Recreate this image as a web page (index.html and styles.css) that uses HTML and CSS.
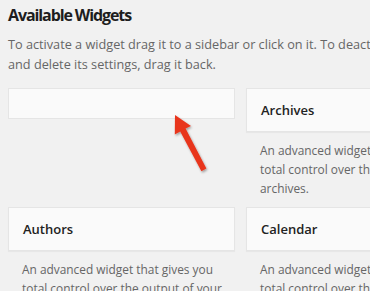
FILE: index.html
```html
<!DOCTYPE html>
<html>
<head>
<meta charset="utf-8">
<link rel="stylesheet" href="styles.css">
</head>
<body>
<div class="wrap">
  <h2 class="title">Available Widgets</h2>
  <p class="intro">To activate a widget drag it to a sidebar or click on it. To deactivate a widget and delete its settings, drag it back.</p>
  <div class="grid">
    <div class="cell">
      <div class="placeholder"></div>
    </div>
    <div class="cell">
      <div class="widget-top"><h3>Archives</h3></div>
      <div class="widget-desc">An advanced widget that gives you total control over the output of your archives.</div>
    </div>
    <div class="cell">
      <div class="widget-top"><h3>Authors</h3></div>
      <div class="widget-desc">An advanced widget that gives you total control over the output of your author listing.</div>
    </div>
    <div class="cell">
      <div class="widget-top"><h3>Calendar</h3></div>
      <div class="widget-desc">An advanced widget that gives you total control over the output of your calendar.</div>
    </div>
  </div>
</div>
<svg class="arrow" width="60" height="80" viewBox="0 0 60 80">
  <defs>
    <filter id="sh" x="-30%" y="-30%" width="160%" height="160%">
      <feDropShadow dx="1" dy="1.5" stdDeviation="1.3" flood-color="#000" flood-opacity="0.35"/>
    </filter>
  </defs>
  <path filter="url(#sh)" fill="#e8361f" d="M12 8 L28 19 L22.6 21.6 L43.4 61.6 L38.4 64.2 L17.2 24.4 L11.8 27.4 Z"/>
</svg>
</body>
</html>
```
FILE: styles.css
```css
html, body {
  margin: 0;
  padding: 0;
}
body {
  background: #f1f1f1;
  font-family: "Open Sans", "Liberation Sans", sans-serif;
  width: 370px;
  height: 291px;
  overflow: hidden;
  position: relative;
}
.wrap {
  padding: 0 0 0 8px;
  width: 480px;
}
.title {
  margin: 0;
  padding-top: 3px;
  font-size: 16px;
  line-height: 24px;
  letter-spacing: -1.1px;
  font-weight: 700;
  color: #1e1e1e;
}
.intro {
  margin: 7px 0 0 0;
  width: 455px;
  font-size: 12.7px;
  line-height: 20px;
  color: #666;
}
.grid {
  display: grid;
  grid-template-columns: 227px 227px;
  column-gap: 11px;
  row-gap: 9px;
  margin-top: 14px;
  align-items: start;
}
.placeholder {
  height: 29px;
  background: #fafafa;
  border: 1px solid #e5e5e5;
}
.widget-top {
  background: #fafafa;
  border: 1px solid #e5e5e5;
  box-shadow: 0 1px 1px rgba(0,0,0,0.04);
}
.widget-top h3 {
  margin: 0;
  padding: 0 14px;
  height: 42px;
  line-height: 42px;
  font-size: 13px;
  font-weight: 600;
  color: #222;
}
.widget-desc {
  padding: 9px 6px 0 14px;
  font-size: 11.9px;
  line-height: 19px;
  color: #666;
}
.arrow {
  position: absolute;
  left: 163px;
  top: 107px;
}
```
